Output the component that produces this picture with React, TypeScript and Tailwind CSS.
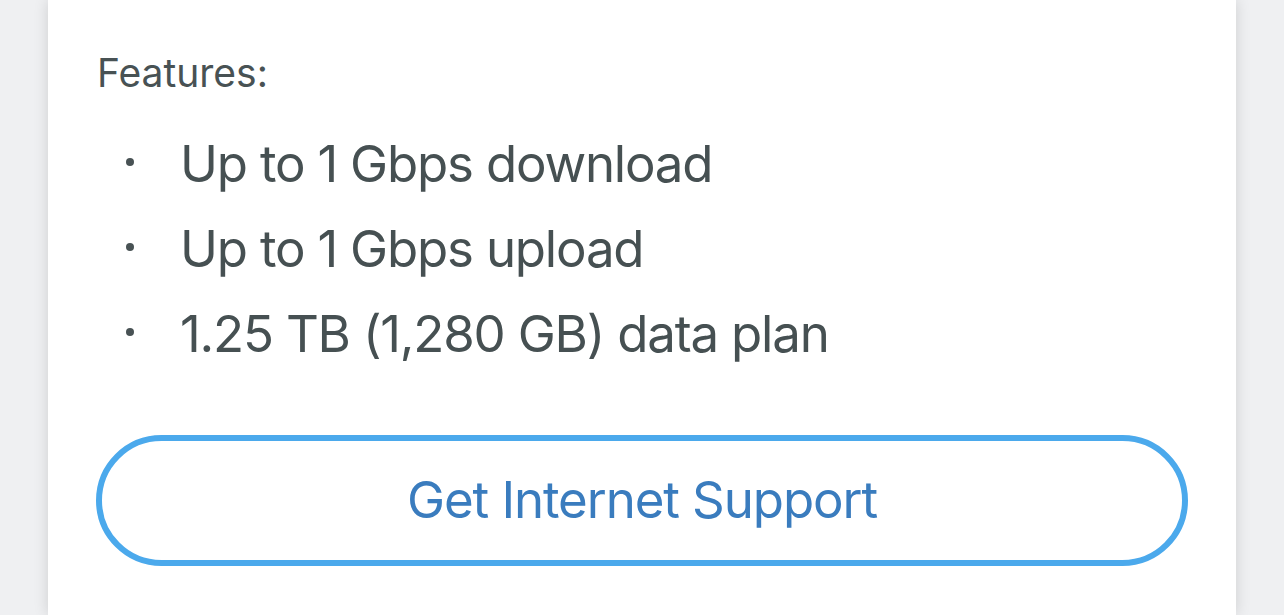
import React from 'react';

const features = [
    'Up to 1 Gbps download',
    'Up to 1 Gbps upload',
    '1.25 TB (1,280 GB) data plan'
];

const App = () => {
    return (
        <div className="w-full h-[615px] overflow-hidden bg-[#eff0f2] px-[48px] font-['Inter',sans-serif]">
            <div className="h-full bg-white shadow-[0_0_14px_rgba(0,0,0,0.14)] px-[48px] pt-[49px]">
                <div className="text-[39px] leading-[48px] text-[#485254] pl-[1px]">Features:</div>
                <ul className="mt-[24px]">
                    {features.map((item) => (
                        <li key={item} className="flex items-center h-[85px]">
                            <span className="ml-[30px] w-[8px] h-[8px] rounded-full bg-[#485254] -mt-[3px]" />
                            <span className="ml-[46px] text-[51px] leading-[85px] tracking-[-1.2px] text-[#465052]">{item}</span>
                        </li>
                    ))}
                </ul>
                <button
                    type="button"
                    className="mt-[59px] w-full h-[131px] rounded-full border-[6px] border-[#4ba9ec] bg-white text-[51px] tracking-[-1.1px] text-[#3a7cbe] flex items-center justify-center"
                >
                    Get Internet Support
                </button>
            </div>
        </div>
    );
};

export default App;
